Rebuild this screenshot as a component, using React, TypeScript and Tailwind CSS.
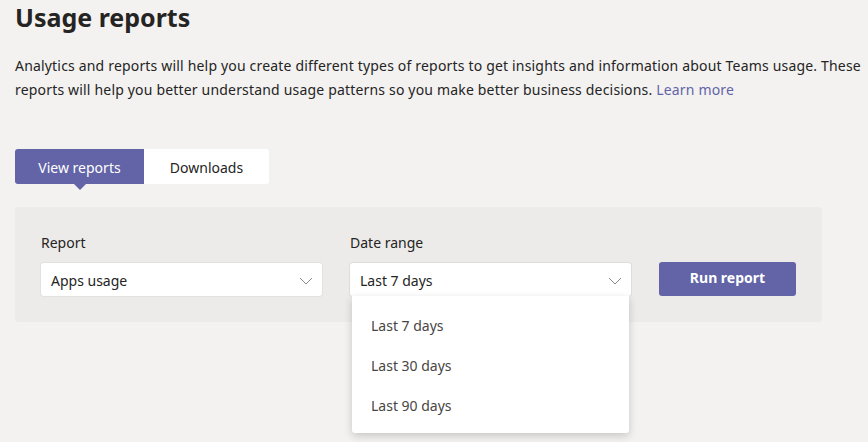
import React, { useState } from 'react';

const font = "font-['Segoe_UI','Noto_Sans','Open_Sans',sans-serif]";

const Chevron = () => (
  <svg width="14" height="8" viewBox="0 0 14 8" fill="none" className="shrink-0">
    <polyline points="1,1 7,7 13,1" stroke="#8a8886" strokeWidth="1" />
  </svg>
);

const ranges = ['Last 7 days', 'Last 30 days', 'Last 90 days'];

export default function App() {
  const [tab, setTab] = useState<'view' | 'downloads'>('view');
  const [range, setRange] = useState('Last 7 days');

  return (
    <div className={`min-h-screen bg-[#f3f2f1] px-[15px] pt-[1px] text-[#252423] ${font}`}>
      <h1 className="text-[25px] leading-[32px] font-bold">Usage reports</h1>

      <p className="mt-[21px] w-[853px] text-[14px] leading-[24px] tracking-[0.18px]">
        Analytics and reports will help you create different types of reports to get insights and information about Teams usage. These
        reports will help you better understand usage patterns so you make better business decisions.{' '}
        <a className="text-[#6264a7]">Learn more</a>
      </p>

      {/* Tabs */}
      <div className="mt-[47px] flex">
        <button
          onClick={() => setTab('view')}
          className={`relative h-[35px] w-[129px] rounded-l-[3px] pt-[1px] text-[14px] ${
            tab === 'view' ? 'bg-[#6264a7] text-white' : 'bg-white text-[#252423]'
          }`}
        >
          View reports
          {tab === 'view' && (
            <span className="absolute left-1/2 top-full -translate-x-1/2 border-x-[6px] border-t-[6px] border-x-transparent border-t-[#6264a7]" />
          )}
        </button>
        <button
          onClick={() => setTab('downloads')}
          className={`h-[35px] w-[125px] rounded-r-[3px] pt-[1px] text-[14px] ${
            tab === 'downloads' ? 'bg-[#6264a7] text-white' : 'bg-white text-[#252423]'
          }`}
        >
          Downloads
        </button>
      </div>

      {/* Panel */}
      <div className="mt-[23px] w-[807px] rounded-[3px] bg-[#edebe9] px-[26px] pt-[26px] pb-[26px]">
        <div className="flex items-end gap-[28px]">
          <div>
            <div className="text-[14px] leading-[20px] text-[#252423]">Report</div>
            <div className="mt-[10px] flex h-[33px] w-[281px] items-center justify-between rounded-[3px] bg-white pt-[2px] pl-[10px] pr-[9px] text-[14px] shadow-[0_0_0_1px_rgba(0,0,0,0.04)]">
              <span>Apps usage</span>
              <Chevron />
            </div>
          </div>

          <div className="relative">
            <div className="text-[14px] leading-[20px] text-[#252423]">Date range</div>
            <div className="mt-[10px] flex h-[33px] w-[281px] items-center justify-between rounded-[3px] bg-white pt-[2px] pl-[10px] pr-[9px] text-[14px] shadow-[0_0_0_1px_rgba(0,0,0,0.06)]">
              <span>{range}</span>
              <Chevron />
            </div>
            <ul className="absolute left-[2px] right-[2px] top-full z-10 rounded-b-[3px] bg-white pt-[9px] pb-[8px] shadow-[0_3px_8px_rgba(0,0,0,0.18)]">
              {ranges.map((r) => (
                <li
                  key={r}
                  onClick={() => setRange(r)}
                  className="flex h-[40px] items-center pl-[19px] text-[14px] text-[#484644]"
                >
                  {r}
                </li>
              ))}
            </ul>
          </div>

          <button className="h-[34px] w-[137px] rounded-[3px] bg-[#6264a7] pb-[4px] text-[14px] font-bold text-white">
            Run report
          </button>
        </div>
      </div>
    </div>
  );
}
